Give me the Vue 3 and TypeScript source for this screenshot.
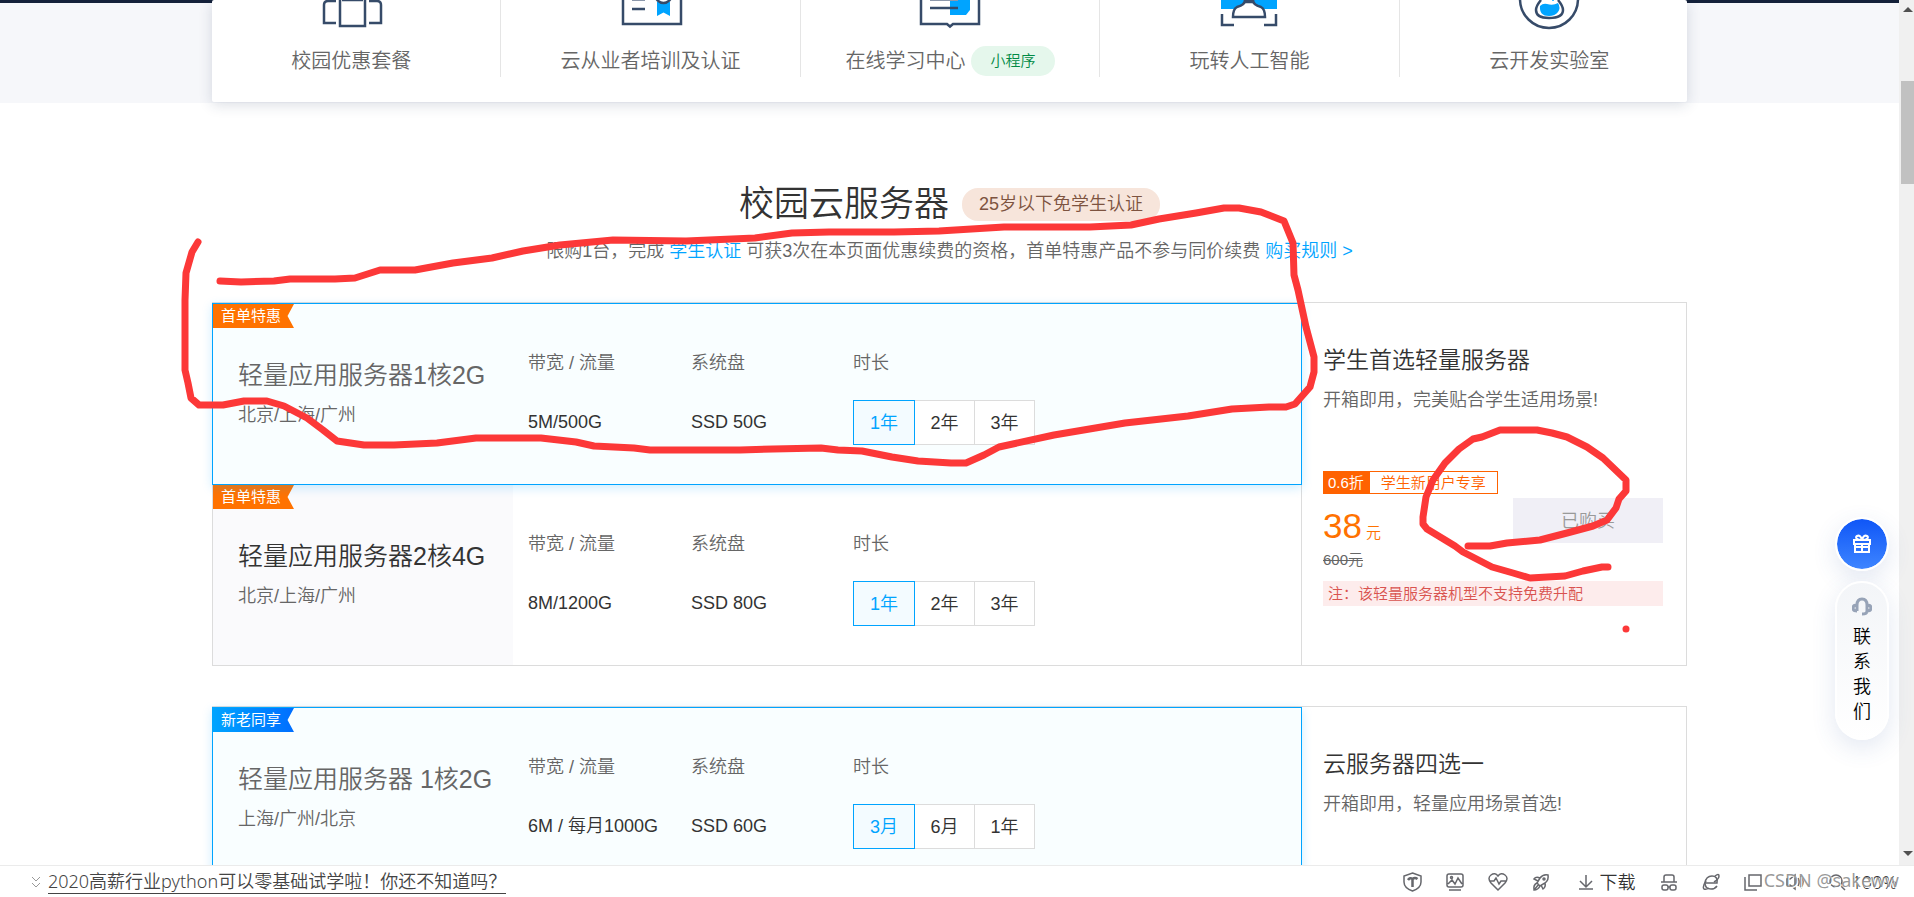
<script setup lang="ts">
import { reactive } from 'vue'

interface Plan {
  tag: string
  tone: 'orange' | 'blue'
  name: string
  regions: string
  traffic: string
  disk: string
  terms: string[]
  term: number
}

interface Group {
  title: string
  summary: string
  selected: number
  plans: Plan[]
  offer?: {
    discount: string
    audience: string
    price: string
    original: string
    action: string
    note: string
  }
}

const entries = [
  { icon: 'package', label: '校园优惠套餐', badge: '' },
  { icon: 'certificate', label: '云从业者培训及认证', badge: '' },
  { icon: 'book', label: '在线学习中心', badge: '小程序' },
  { icon: 'ai', label: '玩转人工智能', badge: '' },
  { icon: 'lab', label: '云开发实验室', badge: '' },
]

const groups = reactive<Group[]>([
  {
    title: '学生首选轻量服务器',
    summary: '开箱即用，完美贴合学生适用场景!',
    selected: 0,
    plans: [
      {
        tag: '首单特惠', tone: 'orange', name: '轻量应用服务器1核2G', regions: '北京/上海/广州',
        traffic: '5M/500G', disk: 'SSD 50G', terms: ['1年', '2年', '3年'], term: 0,
      },
      {
        tag: '首单特惠', tone: 'orange', name: '轻量应用服务器2核4G', regions: '北京/上海/广州',
        traffic: '8M/1200G', disk: 'SSD 80G', terms: ['1年', '2年', '3年'], term: 0,
      },
    ],
    offer: {
      discount: '0.6折', audience: '学生新用户专享', price: '38', original: '600元',
      action: '已购买', note: '注：该轻量服务器机型不支持免费升配',
    },
  },
  {
    title: '云服务器四选一',
    summary: '开箱即用，轻量应用场景首选!',
    selected: 0,
    plans: [
      {
        tag: '新老同享', tone: 'blue', name: '轻量应用服务器 1核2G', regions: '上海/广州/北京',
        traffic: '6M / 每月1000G', disk: 'SSD 60G', terms: ['3月', '6月', '1年'], term: 0,
      },
    ],
  },
])
</script>

<template>
  <div class="browser">
    <div class="viewport">
      <main class="page">
        <div class="hero">
          <div class="entry-card">
            <ul class="entries">
              <li v-for="entry in entries" :key="entry.icon" class="entry">
                <svg v-if="entry.icon === 'package'" class="entry-icon" width="64" height="30" viewBox="0 0 64 30">
                  <path d="M17 1H9Q5 1 5 5V23H17M50 1H58Q62 1 62 5V23H50M21 -4V26H46V-4M23 0H44" />
                </svg>
                <svg v-else-if="entry.icon === 'certificate'" class="entry-icon" width="64" height="30" viewBox="0 0 64 30">
                  <path d="M4 -4V24H62V-4M13 9H26" />
                  <path class="thin" d="M13 0H26" />
                  <path class="fill" d="M38 2H51V16L44.5 12.500L38 16Z" />
                  <circle cx="44.500" cy="-5" r="8" />
                </svg>
                <svg v-else-if="entry.icon === 'book'" class="entry-icon" width="64" height="30" viewBox="0 0 64 30">
                  <path class="fill" d="M32 0H52V10L48 15H32Z" />
                  <path d="M3 -4V24H29L32 26.500L35 24H61V-4M12 8H40" />
                  <path class="thin" d="M12 0H40" />
                </svg>
                <svg v-else-if="entry.icon === 'ai'" class="entry-icon" width="64" height="30" viewBox="0 0 64 30">
                  <path class="fill" d="M4 -1H60V9H4Z" />
                  <path class="paper" d="M28 0Q28 5 20 7Q16 9 16 17H48Q48 9 44 7Q36 5 36 0Z" />
                  <path d="M5 14V25H17M47 25H59V14" />
                  <path d="M27 2H37" />
                </svg>
                <svg v-else class="entry-icon" width="64" height="30" viewBox="0 0 64 30">
                  <circle cx="32" cy="-1" r="29" />
                  <path d="M24 0Q19 6 19 10Q19 18 32 18Q46 18 46 10Q46 6 41 0" />
                  <path class="fill" d="M23 6Q26 3 30 4Q36 6 41 3Q44 8 41 12Q38 16 32 16Q22 16 23 6Z" />
                  <circle class="dot" cx="36" cy="0" r="1" />
                </svg>
                <a class="entry-link" href="#">
                  {{ entry.label }}<span v-if="entry.badge" class="entry-badge">{{ entry.badge }}</span>
                </a>
              </li>
            </ul>
          </div>
        </div>

        <section class="section">
          <header class="heading">
            <h2 class="title">校园云服务器<span class="title-badge">25岁以下免学生认证</span></h2>
            <p class="subtitle">
              限购1台，完成 <a href="#">学生认证</a> 可获3次在本页面优惠续费的资格，首单特惠产品不参与同价续费 <a href="#">购买规则 &gt;</a>
            </p>
          </header>

          <div class="groups">
            <article v-for="group in groups" :key="group.title" class="group">
              <div class="plans">
                <div
                  v-for="(plan, p) in group.plans"
                  :key="plan.name"
                  class="plan"
                  :class="{ active: p === group.selected }"
                  @click="group.selected = p"
                >
                  <span class="ribbon" :class="plan.tone">{{ plan.tag }}</span>
                  <div class="plan-name">
                    <h3>{{ plan.name }}</h3>
                    <p>{{ plan.regions }}</p>
                  </div>
                  <dl class="specs">
                    <div class="spec">
                      <dt>带宽 / 流量</dt>
                      <dd>{{ plan.traffic }}</dd>
                    </div>
                    <div class="spec">
                      <dt>系统盘</dt>
                      <dd>{{ plan.disk }}</dd>
                    </div>
                    <div class="spec">
                      <dt>时长</dt>
                      <dd class="terms">
                        <button
                          v-for="(term, t) in plan.terms"
                          :key="term"
                          type="button"
                          class="term"
                          :class="{ on: t === plan.term }"
                          :aria-pressed="t === plan.term"
                          @click="plan.term = t"
                        >{{ term }}</button>
                      </dd>
                    </div>
                  </dl>
                </div>
              </div>
              <aside class="panel">
                <h3>{{ group.title }}</h3>
                <p class="summary">{{ group.summary }}</p>
                <div v-if="group.offer" class="offer">
                  <div class="tags">
                    <span class="discount">{{ group.offer.discount }}</span>
                    <span class="audience">{{ group.offer.audience }}</span>
                  </div>
                  <div class="deal">
                    <div>
                      <p class="price"><strong>{{ group.offer.price }}</strong> 元</p>
                      <p class="original"><s>{{ group.offer.original }}</s></p>
                    </div>
                    <button type="button" class="buy" disabled>{{ group.offer.action }}</button>
                  </div>
                  <p class="note">{{ group.offer.note }}</p>
                </div>
              </aside>
            </article>
          </div>
        </section>
      </main>

      <div class="scrollbar" aria-hidden="true">
        <svg class="arrow" width="10" height="5" viewBox="0 0 10 5"><path d="M0 5L5 0L10 5Z" /></svg>
        <div class="track"><div class="thumb"></div></div>
        <svg class="arrow" width="10" height="5" viewBox="0 0 10 5"><path d="M0 0L5 5L10 0Z" /></svg>
      </div>

      <div class="floating">
        <button type="button" class="gift" aria-label="礼物">
          <svg width="20" height="20" viewBox="0 0 20 20">
            <path d="M2 6H18V10H2ZM3 10V18H17V10M10 10V18M3 13H17M10 6C4 6 3 3 5 2C7 1 9 2 10 6C11 2 13 1 15 2C17 3 16 6 10 6" />
          </svg>
        </button>
        <button type="button" class="contact">
          <svg width="20" height="20" viewBox="0 0 20 20">
            <path d="M5 7V14M5 8Q1 8 1 11Q1 14 5 14M15 8Q19 8 19 11Q19 14 15 14M5 8Q5 2 10 2Q15 2 15 8V14Q15 17 10 17" />
          </svg>
          <span>联</span><span>系</span><span>我</span><span>们</span>
        </button>
      </div>
    </div>

    <footer class="status">
      <div class="news">
        <svg width="10" height="12" viewBox="0 0 10 12"><path d="M1 1L5 5L9 1M1 7L5 11L9 7" /></svg>
        <a href="#">2020高薪行业python可以零基础试学啦！你还不知道吗？</a>
      </div>
      <div class="tools">
        <svg class="tool" width="19" height="20" viewBox="0 0 19 20">
          <path d="M9.500 1L18 4V10Q18 16 9.500 19Q1 16 1 10V4Z" />
          <path class="bold" d="M5 8Q7 5 9.500 7Q12 5 14.500 7M9.500 7V15" />
        </svg>
        <svg class="tool" width="18" height="20" viewBox="0 0 18 20">
          <path d="M3 2H15Q17 2 17 4V13Q17 15 15 15H3Q1 15 1 13V4Q1 2 3 2ZM3 18H15M2 12L6 8L9 12L12 6L16 12" />
          <circle cx="5.500" cy="5.500" r="1" />
        </svg>
        <svg class="tool" width="20" height="20" viewBox="0 0 20 20">
          <path d="M10 18L3 11Q-1 6 3 3Q7 0 10 4Q13 0 17 3Q21 6 17 11ZM2 9H6L8 6L11 12L13 9H18" />
        </svg>
        <svg class="tool" width="18" height="20" viewBox="0 0 18 20">
          <path d="M16 3Q11 2 8 6L5 11L8 14L13 11Q17 8 16 3ZM8 6Q4 4 2 7L6 9M13 11Q14 15 11 17L9 13M5 11Q1 13 2 18Q6 18 8 14M2 18L7 12" />
          <circle cx="12" cy="7" r="1" />
        </svg>
        <button type="button" class="download">
          <svg class="tool" width="16" height="20" viewBox="0 0 16 20"><path d="M8 3V15M2 9L8 15L14 9M1 17H15" /></svg>
          下载
        </button>
        <svg class="tool" width="18" height="20" viewBox="0 0 18 20">
          <path d="M1 10H17M4 10V5Q4 3 6 3H12Q14 3 14 5V10M8 15H10" />
          <rect x="2" y="13" width="6" height="5" rx="2" />
          <rect x="10" y="13" width="6" height="5" rx="2" />
        </svg>
        <svg class="tool" width="18" height="20" viewBox="0 0 18 20">
          <path d="M4 11H15Q16 4 10 4Q4 4 3 11Q3 17 9 17Q13 17 15 14" />
          <path d="M13 4Q17 1 17 4Q17 7 12 10M4 9Q0 15 2 17Q4 18 7 16" />
        </svg>
        <svg class="tool" width="18" height="20" viewBox="0 0 18 20">
          <path d="M5 3H17V14H5ZM1 5V18H13" />
        </svg>
        <svg class="tool" width="18" height="20" viewBox="0 0 18 20">
          <path d="M1 7H4L9 3V17L4 13H1ZM12 6Q14 10 12 14M15 4Q19 10 15 16" />
        </svg>
        <button type="button" class="zoom">
          <svg class="tool" width="18" height="20" viewBox="0 0 18 20">
            <circle cx="8" cy="9" r="6" />
            <path d="M12 13L17 18" />
          </svg>
          100%
        </button>
      </div>
      <span class="watermark">CSDN @sakeww</span>
    </footer>

    <svg class="pen" viewBox="0 0 1914 897" aria-hidden="true">
      <path d="M198 242L192 252L186 273L185 300V370L188 383L191 398L199 405H223L244 401H267L284 406L307 418L323 430L337 441L364 445H394L437 443L476 438H541L576 442L594 446L634 448L650 450H740L773 449L821 448L838 450L862 451L892 457L918 461L951 463H966L984 455L999 447L1054 435L1125 423L1188 416L1232 409L1269 407H1286L1295 404L1310 387L1314 372V357L1306 327L1298 290L1294 275L1293 243L1284 221L1261 212L1239 208H1224L1196 213L1159 219L1131 225L1090 227H1004L939 231L894 232H829L792 233L755 238L686 241L613 240L560 245L523 251L492 258L453 263L415 270H380L355 278L335 279H290L274 281L241 282L220 281" />
      <path d="M1468 546H1490L1507 543L1540 540L1567 533L1593 526L1607 520L1616 508L1619 499L1626 491V480L1603 458L1587 447L1567 437L1552 433L1537 430H1500L1482 437L1473 439L1459 449L1445 463L1433 480L1426 497L1423 517V524L1427 529L1455 546L1463 552L1492 567L1513 573L1530 578L1565 576L1583 571L1602 567H1608" />
      <path d="M1626 629H1626" />
    </svg>
  </div>
</template>

<style>
html,
body {
  margin: 0;
  background: #fff;
}
</style>

<style scoped>
* {
  box-sizing: border-box;
}
.browser {
  position: relative;
  display: flex;
  flex-direction: column;
  height: 100vh;
  overflow: hidden;
  font-family: "Liberation Sans", "Noto Sans CJK SC", sans-serif;
  font-weight: 350;
  font-size: 18px;
  line-height: 24px;
  color: #333;
}
h2,
h3,
p,
ul,
dl,
dd {
  margin: 0;
  padding: 0;
  font-weight: inherit;
}
button {
  margin: 0;
  padding: 0;
  border: 0;
  background: none;
  font: inherit;
  color: inherit;
}
a {
  color: inherit;
  text-decoration: none;
}
.viewport {
  position: relative;
  display: flex;
  flex: 1;
  min-height: 0;
  overflow: hidden;
}
.page {
  flex: 1;
  min-width: 0;
}
.hero {
  height: 103px;
  border-top: 3px solid #14213a;
  background: #f6f7fa;
}
.entry-card {
  max-width: 1475px;
  margin: -3px auto 0;
  padding-bottom: 25px;
  border-radius: 2px;
  background: #fff;
  box-shadow: 0 3px 14px rgba(30, 50, 90, 0.16);
}
.entries {
  display: grid;
  grid-template-columns: repeat(5, 1fr);
  margin: 0 -12px 0 -10px;
  list-style: none;
}
.entry {
  display: flex;
  flex-direction: column;
  align-items: center;
  gap: 16px;
  height: 77px;
  border-right: 1px solid #e5e5e5;
}
.entry:last-child {
  border-right: 0;
}
.entry-icon {
  flex: none;
  fill: none;
  stroke: #364b69;
  stroke-width: 2.5;
}
.entry-icon .thin {
  stroke: #8c98ab;
  stroke-width: 2;
}
.entry-icon .fill {
  fill: #00a4ff;
  stroke: none;
}
.entry-icon .paper {
  fill: #fff;
}
.entry-icon .dot {
  fill: #00a4ff;
  stroke: none;
}
.entry-link {
  display: flex;
  align-items: center;
  height: 30px;
  font-size: 20px;
  color: #666;
}
.entry-badge {
  margin-left: 6px;
  padding: 0 19px;
  border-radius: 15px;
  background: #e5f7ec;
  font-size: 15px;
  line-height: 30px;
  color: #018a45;
}
.section {
  max-width: 1475px;
  margin: 0 auto;
}
.heading {
  padding-top: 78px;
  text-align: center;
}
.title {
  display: flex;
  align-items: center;
  justify-content: center;
  gap: 13px;
  font-size: 35px;
  line-height: 46px;
}
.title-badge {
  padding: 0 17px;
  border-radius: 16px;
  background: #f7e5db;
  font-size: 18px;
  line-height: 33px;
  color: #7d5340;
}
.subtitle {
  margin-top: 12px;
  color: #666;
}
.subtitle a {
  color: #00a4ff;
}
.groups {
  display: flex;
  flex-direction: column;
  gap: 40px;
  margin-top: 39px;
}
.group {
  display: flex;
  border: 1px solid #dcdcdc;
}
.plans {
  flex: 1;
  min-width: 0;
}
.plan {
  position: relative;
  display: flex;
  box-sizing: content-box;
  min-height: 180px;
}
.plan.active {
  z-index: 1;
  margin: 0 -1px;
  border: 1px solid #00a4ff;
  background: #f9feff;
  box-shadow: 0 3px 10px rgba(0, 164, 255, 0.2);
}
.ribbon {
  position: absolute;
  top: 0;
  left: 0;
  width: 81px;
  padding-left: 8px;
  clip-path: polygon(0 0, 100% 0, 92% 50%, 100% 100%, 0 100%);
  font-size: 15px;
  font-weight: 400;
  line-height: 24px;
  color: #fff;
}
.ribbon.orange {
  background: #ff7200;
}
.ribbon.blue {
  background: linear-gradient(90deg, #00a4ff, #006eff);
}
.plan-name {
  width: 300px;
  padding: 54px 25px 0;
  background: #fafafc;
  color: #666;
}
.active .plan-name {
  background: none;
}
.plan-name h3 {
  font-size: 25px;
  line-height: 34px;
  color: #333;
  white-space: nowrap;
}
.active .plan-name h3 {
  color: #666;
}
.plan-name p {
  margin-top: 11px;
}
.specs {
  display: grid;
  grid-template-columns: 163px 162px 1fr;
  flex: 1;
  padding: 47px 0 0 15px;
}
.spec dt {
  color: #666;
}
.spec dd {
  margin-top: 25px;
  line-height: 45px;
  white-space: nowrap;
}
.terms {
  display: flex;
}
.term {
  width: 60px;
  height: 45px;
  border: 1px solid #dcdcdc;
  background: #fff;
}
.term + .term {
  border-left: 0;
}
.term.on {
  width: 62px;
  border: 1px solid #00a4ff;
  background: #f3fbff;
  color: #00a4ff;
}
.panel {
  width: 385px;
  padding: 41px 23px 0 21px;
  border-left: 1px solid #dcdcdc;
}
.panel h3 {
  font-size: 23px;
  line-height: 32px;
}
.summary {
  margin-top: 12px;
  color: #666;
}
.offer {
  margin-top: 59px;
  font-size: 15px;
}
.tags {
  display: flex;
  line-height: 21px;
}
.discount {
  padding: 1px 5px 0;
  background: #ff6200;
  color: #fff;
}
.audience {
  padding: 0 11px;
  border: 1px solid #ff6200;
  color: #ff6200;
}
.deal {
  display: flex;
  justify-content: space-between;
  align-items: flex-start;
  padding-top: 4px;
}
.price {
  margin-top: 10px;
  line-height: 36px;
  color: #ff7200;
}
.price strong {
  font-size: 35px;
  font-weight: 400;
}
.original {
  line-height: 18px;
  color: #666;
}
.buy {
  width: 150px;
  height: 45px;
  background: #f0eff6;
  font-size: 18px;
  color: #999;
}
.note {
  margin-top: 12px;
  padding-left: 5px;
  background: #fdecec;
  line-height: 25px;
  color: #d9534f;
}
.scrollbar {
  display: flex;
  flex-direction: column;
  align-items: center;
  flex: none;
  width: 15px;
  padding: 7px 0 9px 2px;
  background: #f0f0f0;
}
.arrow {
  flex: none;
  fill: #505050;
}
.track {
  flex: 1;
  width: 100%;
  padding-top: 69px;
}
.thumb {
  height: 103px;
  background: #c1c1c1;
}
.floating {
  position: absolute;
  right: 25px;
  bottom: 125px;
  display: flex;
  flex-direction: column;
  align-items: center;
  gap: 10px;
  color: #000;
}
.gift,
.contact {
  display: flex;
  flex-direction: column;
  align-items: center;
  width: 54px;
  border: 2px solid #fff;
  border-radius: 27px;
  box-shadow: 0 8px 24px rgba(55, 90, 160, 0.14);
}
.gift {
  justify-content: center;
  height: 54px;
  background: linear-gradient(#0f56f7, #3e85ff) padding-box;
}
.gift svg,
.contact svg {
  fill: none;
  stroke: #fff;
  stroke-width: 2;
}
.contact {
  padding: 14px 0 13px;
  background: linear-gradient(#f3f5f8, #fff);
  line-height: 25px;
}
.contact svg {
  margin-bottom: 8px;
  stroke: #97a3b7;
  stroke-width: 3;
}
.status {
  position: relative;
  display: flex;
  align-items: center;
  justify-content: space-between;
  flex: none;
  height: 32px;
  padding: 0 17px 0 31px;
  border-top: 1px solid #ebebeb;
  background: #fff;
  font-family: "Noto Sans", "Noto Sans CJK SC", sans-serif;
  line-height: 26px;
}
.news {
  display: flex;
  align-items: center;
  gap: 7px;
  color: #444;
}
.news a {
  border-bottom: 1px solid #444;
  line-height: 23px;
}
.news svg {
  fill: none;
  stroke: #999;
}
.tools {
  display: flex;
  align-items: center;
  gap: 24px;
}
.tool {
  flex: none;
  fill: none;
  stroke: #66676c;
  stroke-width: 1.5;
}
.tool .bold {
  stroke-width: 2.5;
}
.download,
.zoom {
  display: flex;
  align-items: center;
  gap: 6px;
}
.download {
  margin-left: 4px;
}
.watermark {
  position: absolute;
  right: 15px;
  top: 0;
  font-weight: 400;
  line-height: 28px;
  color: rgba(120, 120, 120, 0.75);
  text-shadow: 1px 1px 0 #fff;
}
.pen {
  position: absolute;
  top: 0;
  left: 0;
  width: 100%;
  z-index: 5;
  fill: none;
  stroke: #fc3838;
  stroke-width: 7;
  stroke-linecap: round;
  stroke-linejoin: round;
  pointer-events: none;
}
</style>
